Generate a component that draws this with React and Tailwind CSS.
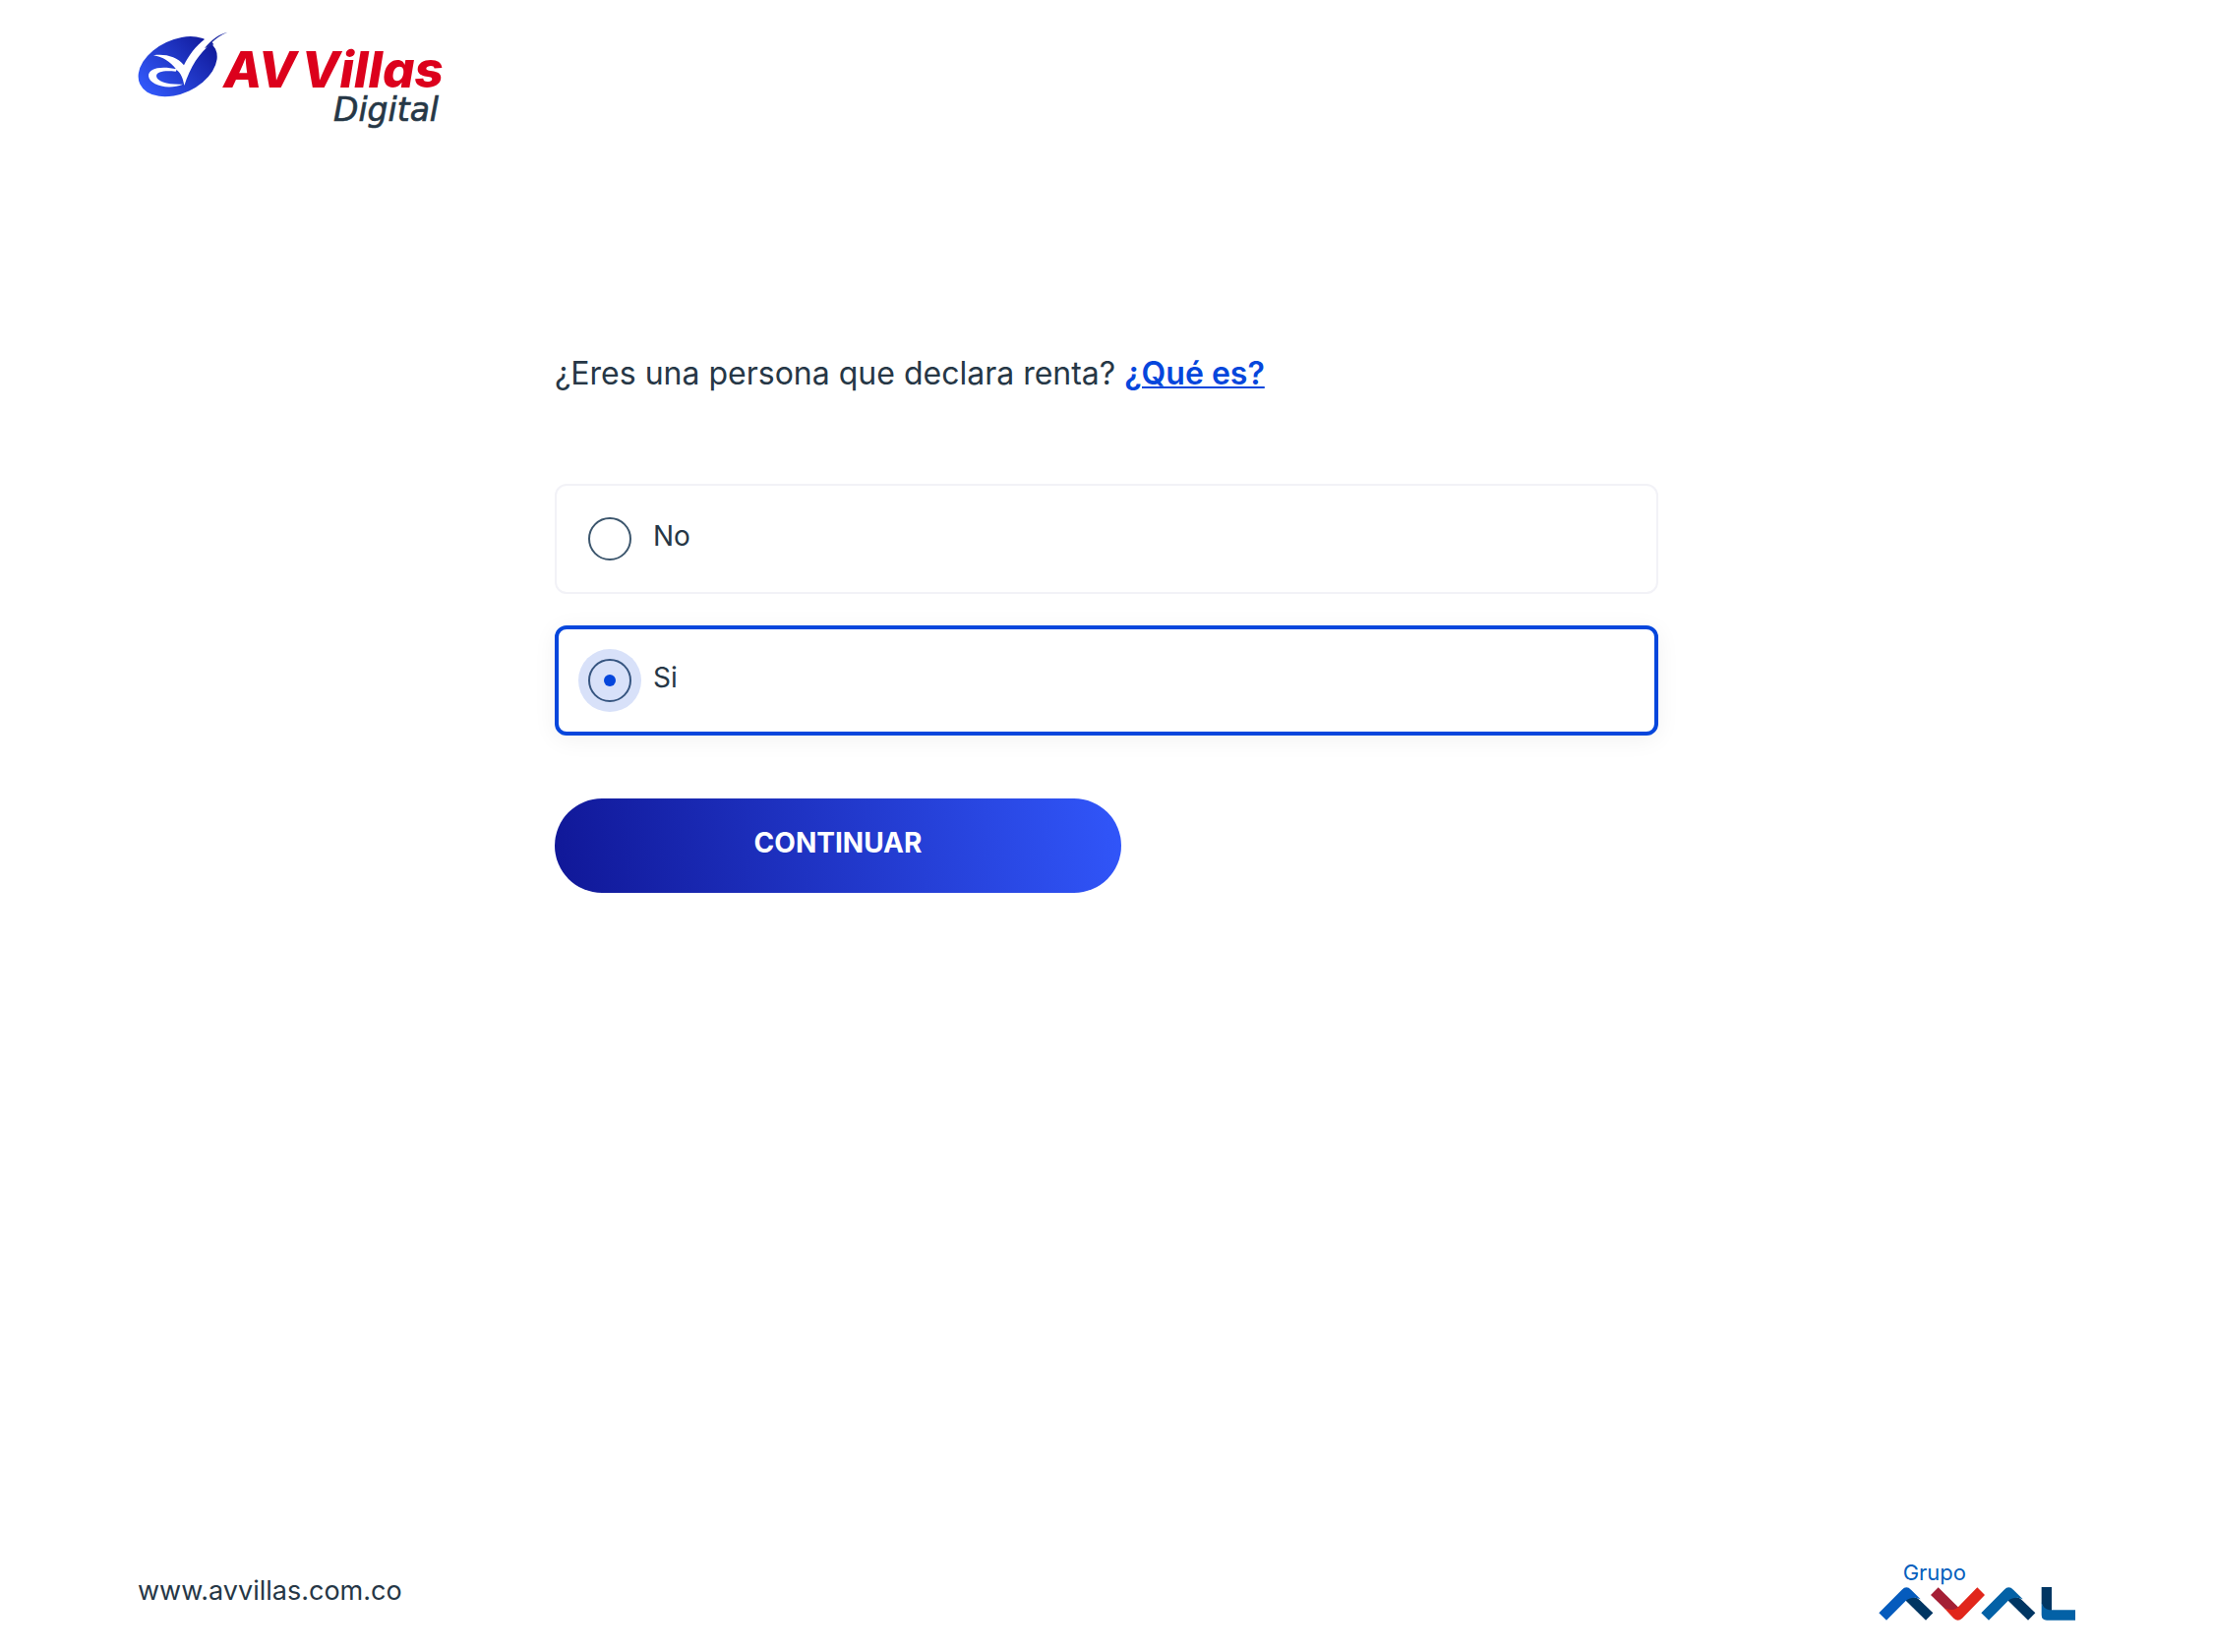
import { useState } from "react";

function VillasLogo() {
  return (
    <svg viewBox="30 36 936 312" className="h-[104px] w-[312px]" role="img" aria-label="AV Villas Digital">
      <defs>
        <linearGradient id="oval" x1="0" y1="0.6" x2="1" y2="0.4">
          <stop offset="0" stopColor="#3259fb" />
          <stop offset="1" stopColor="#111a9a" />
        </linearGradient>
      </defs>
      <ellipse cx="152" cy="143" rx="127" ry="82" transform="rotate(-25 152 143)" fill="url(#oval)" />
      <path
        fill="#fff"
        d="M78 109C112 104 150 112 171 139C186 108 206 82 234 60L244 48L276 50L256 72C219 99 190 145 172 201C168 178 162 163 148 152C130 128 106 113 78 109Z"
      />
      <path
        fill="#fff"
        d="M150 151C100 140 62 148 63 172C65 200 124 216 168 197C124 199 88 190 87 172C87 158 112 154 146 158Z"
      />
      <path fill="#1a27a2" d="M304 38C278 45 254 60 234 88L262 76L257 69C268 57 284 47 304 38Z" />
      <text x="292" y="207" fontFamily="Inter, sans-serif" fontSize="153" fontWeight="800" fontStyle="italic" fill="#dc001c">
        AV
      </text>
      <text x="529" y="207" fontFamily="Inter, sans-serif" fontSize="153" fontWeight="800" fontStyle="italic" fill="#dc001c">
        Villas
      </text>
      <text
        x="627"
        y="309"
        fontFamily="'DejaVu Sans', sans-serif"
        fontSize="99"
        fontStyle="italic"
        fill="#263746"
        stroke="#263746"
        strokeWidth="2"
      >
        Digital
      </text>
    </svg>
  );
}

function AvalLogo() {
  return (
    <svg viewBox="60 0 600 204" className="h-[68px] w-[200px]" role="img" aria-label="Grupo Aval">
      <text x="134" y="82" fontFamily="Inter, sans-serif" fontSize="66" fontWeight="400" fill="#0560bd">
        Grupo
      </text>
      <path fill="#003663" d="M140 140C158 128 172 130 184 140L226 181L204 203Z" />
      <path fill="#055bbd" d="M61 181L131 110Q145 96 159 110L188 139C172 131 157 133 145 142L84 203Z" />
      <path fill="#a41f35" d="M219 126L242 103L310 170C292 176 274 174 262 168Z" />
      <path fill="#e1261b" d="M384 126L361 103L301 164C292 172 276 174 259 165L289 197Q302 209 315 197Z" />
      <path fill="#003663" d="M452 140C470 128 484 130 496 140L538 181L516 203Z" />
      <path fill="#0361a6" d="M373 181L443 110Q457 96 471 110L500 139C484 131 469 133 457 142L396 203Z" />
      <path fill="#003663" d="M557 102H588V174H575C562 166 557 156 557 146Z" />
      <path fill="#0361a6" d="M557 146C559 162 570 172 588 172H660V203H573Q557 203 557 187Z" />
    </svg>
  );
}

function Option({ label, value, selected, onSelect }) {
  return (
    <label
      className={
        selected
          ? "flex h-28 cursor-pointer items-center gap-3 rounded-xl border-4 border-[#0546dc] bg-white pl-5 shadow-[0_4px_24px_rgba(0,0,0,0.06)]"
          : "flex h-28 cursor-pointer items-center gap-3 rounded-xl border-2 border-[#f2f2f7] bg-white pl-[22px]"
      }
    >
      <span className="grid size-16 place-items-center">
        <input
          type="radio"
          name="declara"
          value={value}
          checked={selected}
          onChange={onSelect}
          className="peer col-start-1 row-start-1 size-11 appearance-none rounded-full border-2 border-[#3c566d] outline-none checked:border-[#365580] checked:bg-[#d8e1f9] checked:shadow-[0_0_0_10px_#d8e1f9]"
        />
        <span className="pointer-events-none col-start-1 row-start-1 hidden size-3 rounded-full bg-[#0546dc] peer-checked:block" />
      </span>
      <span className="pb-1.5 text-[28px] leading-9">{label}</span>
    </label>
  );
}

export default function App() {
  const [answer, setAnswer] = useState("si");
  return (
    <div className="flex min-h-screen flex-col bg-white px-[140px] font-[Inter,sans-serif] text-[#263746]">
      <header className="pt-8">
        <VillasLogo />
      </header>
      <main className="mx-auto w-full max-w-[1122px] flex-1 pt-[220px]">
        <form onSubmit={(e) => e.preventDefault()}>
          <h1 className="text-[32px] leading-12">
            ¿Eres una persona que declara renta?{" "}
            <a href="#que-es" className="font-semibold text-[#0546dc] underline decoration-2 underline-offset-2">
              ¿Qué es?
            </a>
          </h1>
          <div className="mt-[88px] flex flex-col gap-8" role="radiogroup" aria-label="¿Eres una persona que declara renta?">
            <Option label="No" value="no" selected={answer === "no"} onSelect={() => setAnswer("no")} />
            <Option label="Si" value="si" selected={answer === "si"} onSelect={() => setAnswer("si")} />
          </div>
          <button
            type="submit"
            className="mt-16 h-24 w-full max-w-[576px] cursor-pointer rounded-full bg-[linear-gradient(80deg,#101797,#3156fa)] pb-1.5 text-[28px] leading-9 font-bold text-white"
          >
            CONTINUAR
          </button>
        </form>
      </main>
      <footer className="flex items-end justify-between pb-8">
        <a href="https://www.avvillas.com.co" className="pb-3 text-[27px] leading-9">
          www.avvillas.com.co
        </a>
        <AvalLogo />
      </footer>
    </div>
  );
}
